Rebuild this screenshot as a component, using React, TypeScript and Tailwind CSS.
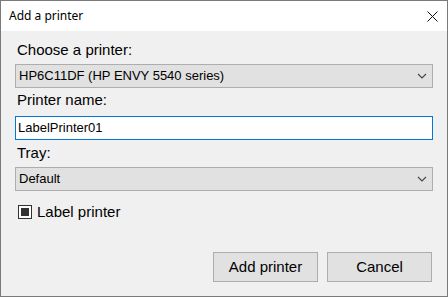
const font = "font-['Liberation_Sans',Arial,sans-serif]";

function Chevron() {
  return (
    <svg width="10" height="6" viewBox="0 0 10 6" className="shrink-0">
      <path d="M1 1 L5 5 L9 1" fill="none" stroke="#444" strokeWidth="1.1" />
    </svg>
  );
}

function CloseIcon() {
  return (
    <svg width="11" height="11" viewBox="0 0 11 11">
      <path d="M0.5 0.5 L10.5 10.5 M10.5 0.5 L0.5 10.5" stroke="#111" strokeWidth="1" fill="none" />
    </svg>
  );
}

function Combo({ value }: { value: string }) {
  return (
    <div className="flex h-[24px] items-center justify-between border border-[#adadad] bg-[#e1e1e1] pl-[3px] pr-[5px] text-[13px] text-black">
      <span>{value}</span>
      <Chevron />
    </div>
  );
}

function Button({ label }: { label: string }) {
  return (
    <button className="flex h-[30px] w-[105px] items-center justify-center border border-[#adadad] bg-[#e1e1e1] text-[15px] text-black">
      {label}
    </button>
  );
}

export default function App() {
  return (
    <div className={`${font} flex h-[297px] w-[448px] flex-col border border-[#7a7a7a] bg-[#f0f0f0]`}>
      {/* title bar */}
      <div className="flex h-[30px] shrink-0 items-center justify-between bg-white pl-[8px] pr-[9px]">
        <span className="font-['Noto_Sans',sans-serif] text-[12px] text-black">Add a printer</span>
        <CloseIcon />
      </div>

      <div className="flex flex-1 flex-col px-[14px]">
        <div className="mt-[10px] h-[18px] pl-[2px] text-[15px] leading-[18px] text-black">Choose a printer:</div>
        <div className="mt-[5px]">
          <Combo value="HP6C11DF (HP ENVY 5540 series)" />
        </div>

        <div className="mt-[3px] h-[18px] pl-[2px] text-[15px] leading-[18px] text-black">Printer name:</div>
        <div className="mt-[7px] flex h-[24px] items-center border border-[#0078d7] bg-white pl-[2px] text-[13px] text-black">
          LabelPrinter01
        </div>

        <div className="mt-[4px] h-[18px] pl-[2px] text-[15px] leading-[18px] text-black">Tray:</div>
        <div className="mt-[5px]">
          <Combo value="Default" />
        </div>

        <div className="mt-[12px] flex items-center gap-[5px] pl-[3px]">
          <div className="flex h-[14px] w-[14px] items-center justify-center border border-[#333] bg-white">
            <div className="h-[8px] w-[8px] bg-[#333]" />
          </div>
          <span className="text-[15px] leading-[18px] text-black">Label printer</span>
        </div>

        <div className="mt-auto mb-[14px] flex justify-end gap-[9px] pr-[1px]">
          <Button label="Add printer" />
          <Button label="Cancel" />
        </div>
      </div>
    </div>
  );
}
